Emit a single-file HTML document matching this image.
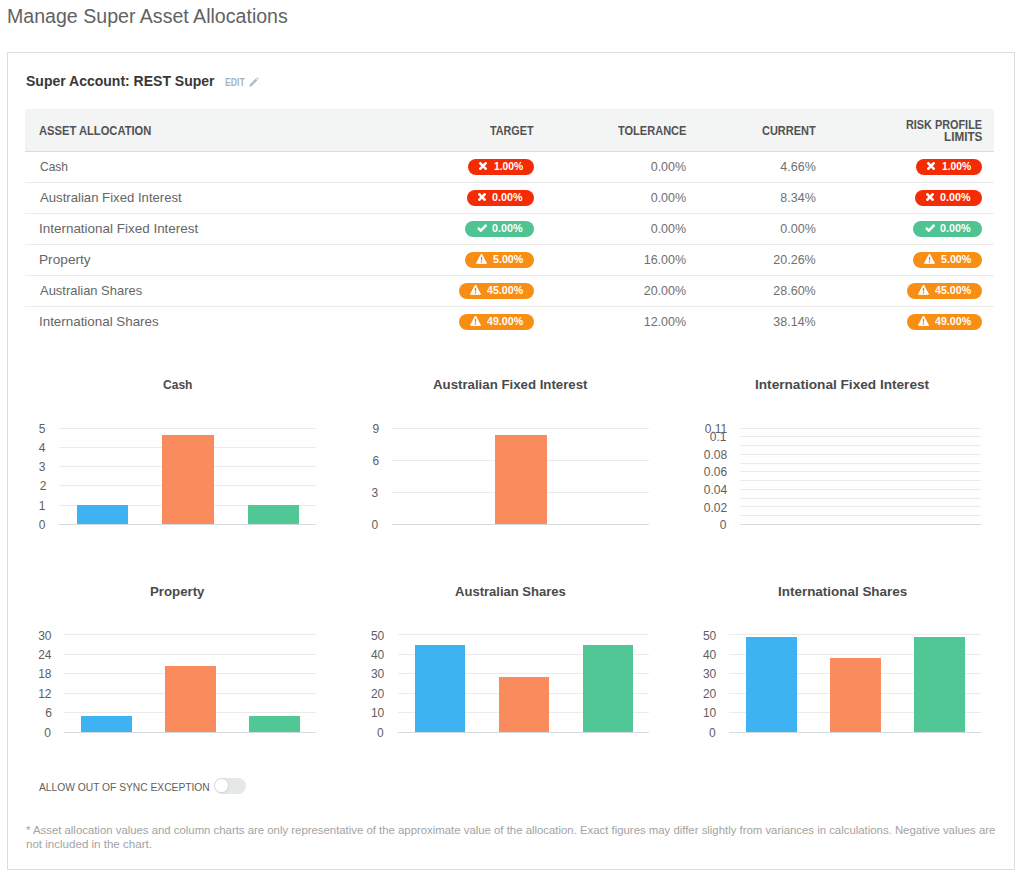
<!DOCTYPE html>
<html><head><meta charset="utf-8"><title>Manage Super Asset Allocations</title>
<style>
html,body{margin:0;padding:0;background:#fff;}
body{width:1023px;height:879px;position:relative;overflow:hidden;font-family:"Liberation Sans",sans-serif;}
.t{position:absolute;white-space:nowrap;}
.r{position:absolute;}
</style></head><body>
<div class='r' style='left:7.00px;top:52.00px;width:1008.00px;height:818.00px;background:#fff;box-sizing:border-box;border:1px solid #dddddd;'></div>
<svg class='r' style='left:247.5px;top:77px' width='11' height='11' viewBox='0 0 11 11'><path d='M1.3 9.7 L1.8 7.4 L7.6 1.6 L9.4 3.4 L3.6 9.2 Z M8.2 1.0 L9.0 0.3 L10.7 2.0 L10.0 2.8 Z' fill='#b4bcc4'/></svg>
<div class='r' style='left:25.00px;top:109.00px;width:969.00px;height:42.00px;background:#f3f4f4;'></div>
<div class='r' style='left:25.00px;top:150.50px;width:969.00px;height:1.00px;background:#dcdcdc;'></div>
<div class='r' style='left:468.20px;top:159.00px;width:65.80px;height:15.50px;background:#f42b05;border-radius:8px;'></div>
<div class='r' style='left:478.80px;top:162.35px;width:8px;height:8px'><svg width='8' height='8' viewBox='0 0 8 8' style='display:block'><path d='M1.4 1.4 L6.6 6.6 M6.6 1.4 L1.4 6.6' stroke='#fff' stroke-width='2.6' stroke-linecap='square'/></svg></div>
<div class='r' style='left:916.20px;top:159.00px;width:65.80px;height:15.50px;background:#f42b05;border-radius:8px;'></div>
<div class='r' style='left:926.80px;top:162.35px;width:8px;height:8px'><svg width='8' height='8' viewBox='0 0 8 8' style='display:block'><path d='M1.4 1.4 L6.6 6.6 M6.6 1.4 L1.4 6.6' stroke='#fff' stroke-width='2.6' stroke-linecap='square'/></svg></div>
<div class='r' style='left:25.00px;top:182.00px;width:969.00px;height:1.00px;background:#ebebeb;'></div>
<div class='r' style='left:466.90px;top:190.00px;width:67.10px;height:15.50px;background:#f42b05;border-radius:8px;'></div>
<div class='r' style='left:477.50px;top:193.35px;width:8px;height:8px'><svg width='8' height='8' viewBox='0 0 8 8' style='display:block'><path d='M1.4 1.4 L6.6 6.6 M6.6 1.4 L1.4 6.6' stroke='#fff' stroke-width='2.6' stroke-linecap='square'/></svg></div>
<div class='r' style='left:914.90px;top:190.00px;width:67.10px;height:15.50px;background:#f42b05;border-radius:8px;'></div>
<div class='r' style='left:925.50px;top:193.35px;width:8px;height:8px'><svg width='8' height='8' viewBox='0 0 8 8' style='display:block'><path d='M1.4 1.4 L6.6 6.6 M6.6 1.4 L1.4 6.6' stroke='#fff' stroke-width='2.6' stroke-linecap='square'/></svg></div>
<div class='r' style='left:25.00px;top:213.00px;width:969.00px;height:1.00px;background:#ebebeb;'></div>
<div class='r' style='left:464.50px;top:221.00px;width:69.50px;height:15.50px;background:#4fc392;border-radius:8px;'></div>
<div class='r' style='left:476.50px;top:223.85px;width:10px;height:8px'><svg width='10' height='8' viewBox='0 0 10 8' style='display:block'><path d='M1.0 3.9 L3.8 6.6 L9.4 0.9' stroke='#fff' stroke-width='2.6' fill='none' stroke-linejoin='miter'/></svg></div>
<div class='r' style='left:912.50px;top:221.00px;width:69.50px;height:15.50px;background:#4fc392;border-radius:8px;'></div>
<div class='r' style='left:924.50px;top:223.85px;width:10px;height:8px'><svg width='10' height='8' viewBox='0 0 10 8' style='display:block'><path d='M1.0 3.9 L3.8 6.6 L9.4 0.9' stroke='#fff' stroke-width='2.6' fill='none' stroke-linejoin='miter'/></svg></div>
<div class='r' style='left:25.00px;top:244.00px;width:969.00px;height:1.00px;background:#ebebeb;'></div>
<div class='r' style='left:465.30px;top:252.00px;width:68.70px;height:15.50px;background:#f88e14;border-radius:8px;'></div>
<div class='r' style='left:476.00px;top:253.25px;width:11px;height:11px'><svg width='11' height='11' viewBox='0 0 11 11' style='display:block'><path d='M5.5 0.9 L10.5 10.3 L0.5 10.3 Z' fill='#fff' stroke='#fff' stroke-width='1' stroke-linejoin='round'/><rect x='4.85' y='3.9' width='1.3' height='3.5' fill='#b08a60'/><rect x='4.85' y='8.2' width='1.3' height='1.3' fill='#b08a60'/></svg></div>
<div class='r' style='left:913.30px;top:252.00px;width:68.70px;height:15.50px;background:#f88e14;border-radius:8px;'></div>
<div class='r' style='left:924.00px;top:253.25px;width:11px;height:11px'><svg width='11' height='11' viewBox='0 0 11 11' style='display:block'><path d='M5.5 0.9 L10.5 10.3 L0.5 10.3 Z' fill='#fff' stroke='#fff' stroke-width='1' stroke-linejoin='round'/><rect x='4.85' y='3.9' width='1.3' height='3.5' fill='#b08a60'/><rect x='4.85' y='8.2' width='1.3' height='1.3' fill='#b08a60'/></svg></div>
<div class='r' style='left:25.00px;top:275.00px;width:969.00px;height:1.00px;background:#ebebeb;'></div>
<div class='r' style='left:459.30px;top:283.00px;width:74.70px;height:15.50px;background:#f88e14;border-radius:8px;'></div>
<div class='r' style='left:470.00px;top:284.25px;width:11px;height:11px'><svg width='11' height='11' viewBox='0 0 11 11' style='display:block'><path d='M5.5 0.9 L10.5 10.3 L0.5 10.3 Z' fill='#fff' stroke='#fff' stroke-width='1' stroke-linejoin='round'/><rect x='4.85' y='3.9' width='1.3' height='3.5' fill='#b08a60'/><rect x='4.85' y='8.2' width='1.3' height='1.3' fill='#b08a60'/></svg></div>
<div class='r' style='left:907.30px;top:283.00px;width:74.70px;height:15.50px;background:#f88e14;border-radius:8px;'></div>
<div class='r' style='left:918.00px;top:284.25px;width:11px;height:11px'><svg width='11' height='11' viewBox='0 0 11 11' style='display:block'><path d='M5.5 0.9 L10.5 10.3 L0.5 10.3 Z' fill='#fff' stroke='#fff' stroke-width='1' stroke-linejoin='round'/><rect x='4.85' y='3.9' width='1.3' height='3.5' fill='#b08a60'/><rect x='4.85' y='8.2' width='1.3' height='1.3' fill='#b08a60'/></svg></div>
<div class='r' style='left:25.00px;top:306.00px;width:969.00px;height:1.00px;background:#ebebeb;'></div>
<div class='r' style='left:459.30px;top:314.00px;width:74.70px;height:15.50px;background:#f88e14;border-radius:8px;'></div>
<div class='r' style='left:470.00px;top:315.25px;width:11px;height:11px'><svg width='11' height='11' viewBox='0 0 11 11' style='display:block'><path d='M5.5 0.9 L10.5 10.3 L0.5 10.3 Z' fill='#fff' stroke='#fff' stroke-width='1' stroke-linejoin='round'/><rect x='4.85' y='3.9' width='1.3' height='3.5' fill='#b08a60'/><rect x='4.85' y='8.2' width='1.3' height='1.3' fill='#b08a60'/></svg></div>
<div class='r' style='left:907.30px;top:314.00px;width:74.70px;height:15.50px;background:#f88e14;border-radius:8px;'></div>
<div class='r' style='left:918.00px;top:315.25px;width:11px;height:11px'><svg width='11' height='11' viewBox='0 0 11 11' style='display:block'><path d='M5.5 0.9 L10.5 10.3 L0.5 10.3 Z' fill='#fff' stroke='#fff' stroke-width='1' stroke-linejoin='round'/><rect x='4.85' y='3.9' width='1.3' height='3.5' fill='#b08a60'/><rect x='4.85' y='8.2' width='1.3' height='1.3' fill='#b08a60'/></svg></div>
<div class='r' style='left:59.00px;top:505.00px;width:257.00px;height:1.00px;background:#ebebeb;'></div>
<div class='r' style='left:59.00px;top:485.00px;width:257.00px;height:1.00px;background:#ebebeb;'></div>
<div class='r' style='left:59.00px;top:466.00px;width:257.00px;height:1.00px;background:#ebebeb;'></div>
<div class='r' style='left:59.00px;top:447.00px;width:257.00px;height:1.00px;background:#ebebeb;'></div>
<div class='r' style='left:59.00px;top:428.00px;width:257.00px;height:1.00px;background:#ebebeb;'></div>
<div class='r' style='left:59.00px;top:524.00px;width:257.00px;height:1.00px;background:#d6dbdf;'></div>
<div class='r' style='left:77.00px;top:505.20px;width:51.00px;height:19.30px;background:#3db3f2;'></div>
<div class='r' style='left:162.00px;top:434.56px;width:52.00px;height:89.94px;background:#fa8b5c;'></div>
<div class='r' style='left:248.00px;top:505.20px;width:51.00px;height:19.30px;background:#50c794;'></div>
<div class='r' style='left:392.00px;top:492.00px;width:257.00px;height:1.00px;background:#ebebeb;'></div>
<div class='r' style='left:392.00px;top:460.00px;width:257.00px;height:1.00px;background:#ebebeb;'></div>
<div class='r' style='left:392.00px;top:428.00px;width:257.00px;height:1.00px;background:#ebebeb;'></div>
<div class='r' style='left:392.00px;top:524.00px;width:257.00px;height:1.00px;background:#d6dbdf;'></div>
<div class='r' style='left:495.00px;top:435.08px;width:52.00px;height:89.42px;background:#fa8b5c;'></div>
<div class='r' style='left:740.00px;top:515.00px;width:241.00px;height:1.00px;background:#ebebeb;'></div>
<div class='r' style='left:740.00px;top:498.00px;width:241.00px;height:1.00px;background:#ebebeb;'></div>
<div class='r' style='left:740.00px;top:480.00px;width:241.00px;height:1.00px;background:#ebebeb;'></div>
<div class='r' style='left:740.00px;top:463.00px;width:241.00px;height:1.00px;background:#ebebeb;'></div>
<div class='r' style='left:740.00px;top:445.00px;width:241.00px;height:1.00px;background:#ebebeb;'></div>
<div class='r' style='left:740.00px;top:506.00px;width:241.00px;height:1.00px;background:#ebebeb;'></div>
<div class='r' style='left:740.00px;top:489.00px;width:241.00px;height:1.00px;background:#ebebeb;'></div>
<div class='r' style='left:740.00px;top:471.00px;width:241.00px;height:1.00px;background:#ebebeb;'></div>
<div class='r' style='left:740.00px;top:454.00px;width:241.00px;height:1.00px;background:#ebebeb;'></div>
<div class='r' style='left:740.00px;top:436.00px;width:241.00px;height:1.00px;background:#ebebeb;'></div>
<div class='r' style='left:740.00px;top:428.00px;width:241.00px;height:1.00px;background:#ebebeb;'></div>
<div class='r' style='left:740.00px;top:524.00px;width:241.00px;height:1.00px;background:#d6dbdf;'></div>
<div class='r' style='left:64.00px;top:712.00px;width:252.00px;height:1.00px;background:#ebebeb;'></div>
<div class='r' style='left:64.00px;top:693.00px;width:252.00px;height:1.00px;background:#ebebeb;'></div>
<div class='r' style='left:64.00px;top:673.00px;width:252.00px;height:1.00px;background:#ebebeb;'></div>
<div class='r' style='left:64.00px;top:654.00px;width:252.00px;height:1.00px;background:#ebebeb;'></div>
<div class='r' style='left:64.00px;top:634.00px;width:252.00px;height:1.00px;background:#ebebeb;'></div>
<div class='r' style='left:64.00px;top:732.00px;width:252.00px;height:1.00px;background:#d6dbdf;'></div>
<div class='r' style='left:81.00px;top:715.83px;width:51.00px;height:16.17px;background:#3db3f2;'></div>
<div class='r' style='left:165.00px;top:666.49px;width:51.00px;height:65.51px;background:#fa8b5c;'></div>
<div class='r' style='left:249.00px;top:715.83px;width:51.00px;height:16.17px;background:#50c794;'></div>
<div class='r' style='left:397.50px;top:712.00px;width:251.80px;height:1.00px;background:#ebebeb;'></div>
<div class='r' style='left:397.50px;top:693.00px;width:251.80px;height:1.00px;background:#ebebeb;'></div>
<div class='r' style='left:397.50px;top:673.00px;width:251.80px;height:1.00px;background:#ebebeb;'></div>
<div class='r' style='left:397.50px;top:654.00px;width:251.80px;height:1.00px;background:#ebebeb;'></div>
<div class='r' style='left:397.50px;top:634.00px;width:251.80px;height:1.00px;background:#ebebeb;'></div>
<div class='r' style='left:397.50px;top:732.00px;width:251.80px;height:1.00px;background:#d6dbdf;'></div>
<div class='r' style='left:415.00px;top:644.70px;width:50.00px;height:87.30px;background:#3db3f2;'></div>
<div class='r' style='left:499.00px;top:676.52px;width:50.00px;height:55.48px;background:#fa8b5c;'></div>
<div class='r' style='left:583.00px;top:644.70px;width:50.00px;height:87.30px;background:#50c794;'></div>
<div class='r' style='left:729.00px;top:712.00px;width:252.20px;height:1.00px;background:#ebebeb;'></div>
<div class='r' style='left:729.00px;top:693.00px;width:252.20px;height:1.00px;background:#ebebeb;'></div>
<div class='r' style='left:729.00px;top:673.00px;width:252.20px;height:1.00px;background:#ebebeb;'></div>
<div class='r' style='left:729.00px;top:654.00px;width:252.20px;height:1.00px;background:#ebebeb;'></div>
<div class='r' style='left:729.00px;top:634.00px;width:252.20px;height:1.00px;background:#ebebeb;'></div>
<div class='r' style='left:729.00px;top:732.00px;width:252.20px;height:1.00px;background:#d6dbdf;'></div>
<div class='r' style='left:746.00px;top:636.94px;width:51.00px;height:95.06px;background:#3db3f2;'></div>
<div class='r' style='left:830.00px;top:658.01px;width:51.00px;height:73.99px;background:#fa8b5c;'></div>
<div class='r' style='left:914.00px;top:636.94px;width:51.00px;height:95.06px;background:#50c794;'></div>
<div class='r' style='left:214.50px;top:778.00px;width:31.00px;height:15.50px;background:#e5e8e9;border-radius:8px;'></div>
<div class='r' style='left:215.30px;top:779.30px;width:12.80px;height:12.80px;background:#fff;border-radius:50%;box-shadow:0 0 0 1px #d7dadc, 0 1px 2px rgba(0,0,0,.12);'></div>
<div class='t' style='top:6.07px;font-size:20px;line-height:20px;font-weight:400;color:#626262;left:7.02px;transform-origin:0 0;transform:scaleX(0.9789);'>Manage Super Asset Allocations</div>
<div class='t' style='top:74.15px;font-size:14px;line-height:14px;font-weight:700;color:#383838;left:26.00px;transform-origin:0 0;'>Super Account: REST Super</div>
<div class='t' style='top:77.83px;font-size:10px;line-height:10px;font-weight:700;color:#a9b4bd;left:224.50px;transform-origin:0 0;transform:scaleX(0.8696);'>EDIT</div>
<div class='t' style='top:124.84px;font-size:12px;line-height:12px;font-weight:700;color:#525252;left:39.30px;transform-origin:0 0;transform:scaleX(0.9308);'>ASSET ALLOCATION</div>
<div class='t' style='top:124.84px;font-size:12px;line-height:12px;font-weight:700;color:#525252;left:490.00px;transform-origin:0 0;transform:scaleX(0.8980);'>TARGET</div>
<div class='t' style='top:124.84px;font-size:12px;line-height:12px;font-weight:700;color:#525252;left:618.00px;transform-origin:0 0;transform:scaleX(0.9189);'>TOLERANCE</div>
<div class='t' style='top:124.84px;font-size:12px;line-height:12px;font-weight:700;color:#525252;left:761.50px;transform-origin:0 0;transform:scaleX(0.9153);'>CURRENT</div>
<div class='t' style='top:119.14px;font-size:12px;line-height:12px;font-weight:700;color:#525252;left:906.00px;transform-origin:0 0;transform:scaleX(0.9048);'>RISK PROFILE</div>
<div class='t' style='top:130.84px;font-size:12px;line-height:12px;font-weight:700;color:#525252;left:944.00px;transform-origin:0 0;transform:scaleX(0.9744);'>LIMITS</div>
<div class='t' style='top:159.70px;font-size:13px;line-height:13px;font-weight:400;color:#666;left:39.60px;transform-origin:0 0;transform:scaleX(0.9233);'>Cash</div>
<div class='t' style='top:160.62px;font-size:12.5px;line-height:12.5px;font-weight:400;color:#707070;left:650.70px;transform-origin:0 0;'>0.00%</div>
<div class='t' style='top:160.62px;font-size:12.5px;line-height:12.5px;font-weight:400;color:#707070;left:780.30px;transform-origin:0 0;'>4.66%</div>
<div class='t' style='top:161.26px;font-size:10.5px;line-height:10.5px;font-weight:700;color:#fff;left:493.60px;transform-origin:0 0;transform:scaleX(0.9800);'>1.00%</div>
<div class='t' style='top:161.26px;font-size:10.5px;line-height:10.5px;font-weight:700;color:#fff;left:941.60px;transform-origin:0 0;transform:scaleX(0.9800);'>1.00%</div>
<div class='t' style='top:190.70px;font-size:13px;line-height:13px;font-weight:400;color:#666;left:39.60px;transform-origin:0 0;transform:scaleX(1.0114);'>Australian Fixed Interest</div>
<div class='t' style='top:191.62px;font-size:12.5px;line-height:12.5px;font-weight:400;color:#707070;left:650.70px;transform-origin:0 0;'>0.00%</div>
<div class='t' style='top:191.62px;font-size:12.5px;line-height:12.5px;font-weight:400;color:#707070;left:780.30px;transform-origin:0 0;'>8.34%</div>
<div class='t' style='top:192.26px;font-size:10.5px;line-height:10.5px;font-weight:700;color:#fff;left:492.30px;transform-origin:0 0;transform:scaleX(1.0233);'>0.00%</div>
<div class='t' style='top:192.26px;font-size:10.5px;line-height:10.5px;font-weight:700;color:#fff;left:940.30px;transform-origin:0 0;transform:scaleX(1.0233);'>0.00%</div>
<div class='t' style='top:221.70px;font-size:13px;line-height:13px;font-weight:400;color:#666;left:38.57px;transform-origin:0 0;transform:scaleX(1.0346);'>International Fixed Interest</div>
<div class='t' style='top:222.62px;font-size:12.5px;line-height:12.5px;font-weight:400;color:#707070;left:650.70px;transform-origin:0 0;'>0.00%</div>
<div class='t' style='top:222.62px;font-size:12.5px;line-height:12.5px;font-weight:400;color:#707070;left:780.30px;transform-origin:0 0;'>0.00%</div>
<div class='t' style='top:223.26px;font-size:10.5px;line-height:10.5px;font-weight:700;color:#fff;left:492.30px;transform-origin:0 0;transform:scaleX(1.0233);'>0.00%</div>
<div class='t' style='top:223.26px;font-size:10.5px;line-height:10.5px;font-weight:700;color:#fff;left:940.30px;transform-origin:0 0;transform:scaleX(1.0233);'>0.00%</div>
<div class='t' style='top:252.70px;font-size:13px;line-height:13px;font-weight:400;color:#666;left:38.55px;transform-origin:0 0;transform:scaleX(1.0521);'>Property</div>
<div class='t' style='top:253.62px;font-size:12.5px;line-height:12.5px;font-weight:400;color:#707070;left:643.70px;transform-origin:0 0;'>16.00%</div>
<div class='t' style='top:253.62px;font-size:12.5px;line-height:12.5px;font-weight:400;color:#707070;left:773.30px;transform-origin:0 0;'>20.26%</div>
<div class='t' style='top:254.26px;font-size:10.5px;line-height:10.5px;font-weight:700;color:#fff;left:492.50px;transform-origin:0 0;transform:scaleX(1.0167);'>5.00%</div>
<div class='t' style='top:254.26px;font-size:10.5px;line-height:10.5px;font-weight:700;color:#fff;left:940.50px;transform-origin:0 0;transform:scaleX(1.0167);'>5.00%</div>
<div class='t' style='top:283.70px;font-size:13px;line-height:13px;font-weight:400;color:#666;left:39.60px;transform-origin:0 0;transform:scaleX(0.9951);'>Australian Shares</div>
<div class='t' style='top:284.62px;font-size:12.5px;line-height:12.5px;font-weight:400;color:#707070;left:643.70px;transform-origin:0 0;'>20.00%</div>
<div class='t' style='top:284.62px;font-size:12.5px;line-height:12.5px;font-weight:400;color:#707070;left:773.30px;transform-origin:0 0;'>28.60%</div>
<div class='t' style='top:285.26px;font-size:10.5px;line-height:10.5px;font-weight:700;color:#fff;left:486.50px;transform-origin:0 0;transform:scaleX(1.0139);'>45.00%</div>
<div class='t' style='top:285.26px;font-size:10.5px;line-height:10.5px;font-weight:700;color:#fff;left:934.50px;transform-origin:0 0;transform:scaleX(1.0139);'>45.00%</div>
<div class='t' style='top:314.70px;font-size:13px;line-height:13px;font-weight:400;color:#666;left:38.57px;transform-origin:0 0;transform:scaleX(1.0287);'>International Shares</div>
<div class='t' style='top:315.62px;font-size:12.5px;line-height:12.5px;font-weight:400;color:#707070;left:643.70px;transform-origin:0 0;'>12.00%</div>
<div class='t' style='top:315.62px;font-size:12.5px;line-height:12.5px;font-weight:400;color:#707070;left:773.30px;transform-origin:0 0;'>38.14%</div>
<div class='t' style='top:316.26px;font-size:10.5px;line-height:10.5px;font-weight:700;color:#fff;left:486.50px;transform-origin:0 0;transform:scaleX(1.0139);'>49.00%</div>
<div class='t' style='top:316.26px;font-size:10.5px;line-height:10.5px;font-weight:700;color:#fff;left:934.50px;transform-origin:0 0;transform:scaleX(1.0139);'>49.00%</div>
<div class='t' style='top:377.80px;font-size:13px;line-height:13px;font-weight:700;color:#4a4a4a;left:163.35px;transform-origin:0 0;transform:scaleX(0.9258);'>Cash</div>
<div class='t' style='top:519.04px;font-size:12px;line-height:12px;font-weight:400;color:#606060;left:38.70px;transform-origin:0 0;'>0</div>
<div class='t' style='top:499.74px;font-size:12px;line-height:12px;font-weight:400;color:#606060;left:38.70px;transform-origin:0 0;'>1</div>
<div class='t' style='top:480.44px;font-size:12px;line-height:12px;font-weight:400;color:#606060;left:39.70px;transform-origin:0 0;'>2</div>
<div class='t' style='top:461.14px;font-size:12px;line-height:12px;font-weight:400;color:#606060;left:38.70px;transform-origin:0 0;'>3</div>
<div class='t' style='top:441.84px;font-size:12px;line-height:12px;font-weight:400;color:#606060;left:38.70px;transform-origin:0 0;'>4</div>
<div class='t' style='top:422.54px;font-size:12px;line-height:12px;font-weight:400;color:#606060;left:38.70px;transform-origin:0 0;'>5</div>
<div class='t' style='top:377.80px;font-size:13px;line-height:13px;font-weight:700;color:#4a4a4a;left:433.20px;transform-origin:0 0;transform:scaleX(1.0184);'>Australian Fixed Interest</div>
<div class='t' style='top:519.04px;font-size:12px;line-height:12px;font-weight:400;color:#606060;left:371.40px;transform-origin:0 0;'>0</div>
<div class='t' style='top:486.88px;font-size:12px;line-height:12px;font-weight:400;color:#606060;left:371.40px;transform-origin:0 0;'>3</div>
<div class='t' style='top:454.71px;font-size:12px;line-height:12px;font-weight:400;color:#606060;left:372.40px;transform-origin:0 0;'>6</div>
<div class='t' style='top:422.54px;font-size:12px;line-height:12px;font-weight:400;color:#606060;left:372.40px;transform-origin:0 0;'>9</div>
<div class='t' style='top:377.80px;font-size:13px;line-height:13px;font-weight:700;color:#4a4a4a;left:755.30px;transform-origin:0 0;transform:scaleX(1.0479);'>International Fixed Interest</div>
<div class='t' style='top:519.04px;font-size:12px;line-height:12px;font-weight:400;color:#606060;left:719.80px;transform-origin:0 0;'>0</div>
<div class='t' style='top:501.50px;font-size:12px;line-height:12px;font-weight:400;color:#606060;left:703.80px;transform-origin:0 0;'>0.02</div>
<div class='t' style='top:483.95px;font-size:12px;line-height:12px;font-weight:400;color:#606060;left:703.80px;transform-origin:0 0;'>0.04</div>
<div class='t' style='top:466.41px;font-size:12px;line-height:12px;font-weight:400;color:#606060;left:703.80px;transform-origin:0 0;'>0.06</div>
<div class='t' style='top:448.86px;font-size:12px;line-height:12px;font-weight:400;color:#606060;left:703.80px;transform-origin:0 0;'>0.08</div>
<div class='t' style='top:431.31px;font-size:12px;line-height:12px;font-weight:400;color:#606060;left:709.80px;transform-origin:0 0;'>0.1</div>
<div class='t' style='top:422.54px;font-size:12px;line-height:12px;font-weight:400;color:#606060;left:704.80px;transform-origin:0 0;'>0.11</div>
<div class='t' style='top:584.60px;font-size:13px;line-height:13px;font-weight:700;color:#4a4a4a;left:149.88px;transform-origin:0 0;transform:scaleX(1.0189);'>Property</div>
<div class='t' style='top:726.54px;font-size:12px;line-height:12px;font-weight:400;color:#606060;left:44.20px;transform-origin:0 0;'>0</div>
<div class='t' style='top:707.14px;font-size:12px;line-height:12px;font-weight:400;color:#606060;left:45.20px;transform-origin:0 0;'>6</div>
<div class='t' style='top:687.74px;font-size:12px;line-height:12px;font-weight:400;color:#606060;left:38.20px;transform-origin:0 0;'>12</div>
<div class='t' style='top:668.34px;font-size:12px;line-height:12px;font-weight:400;color:#606060;left:38.20px;transform-origin:0 0;'>18</div>
<div class='t' style='top:648.94px;font-size:12px;line-height:12px;font-weight:400;color:#606060;left:38.20px;transform-origin:0 0;'>24</div>
<div class='t' style='top:629.54px;font-size:12px;line-height:12px;font-weight:400;color:#606060;left:38.20px;transform-origin:0 0;'>30</div>
<div class='t' style='top:584.60px;font-size:13px;line-height:13px;font-weight:700;color:#4a4a4a;left:455.45px;transform-origin:0 0;transform:scaleX(1.0027);'>Australian Shares</div>
<div class='t' style='top:726.54px;font-size:12px;line-height:12px;font-weight:400;color:#606060;left:376.90px;transform-origin:0 0;'>0</div>
<div class='t' style='top:707.14px;font-size:12px;line-height:12px;font-weight:400;color:#606060;left:370.90px;transform-origin:0 0;'>10</div>
<div class='t' style='top:687.74px;font-size:12px;line-height:12px;font-weight:400;color:#606060;left:370.90px;transform-origin:0 0;'>20</div>
<div class='t' style='top:668.34px;font-size:12px;line-height:12px;font-weight:400;color:#606060;left:370.90px;transform-origin:0 0;'>30</div>
<div class='t' style='top:648.94px;font-size:12px;line-height:12px;font-weight:400;color:#606060;left:370.90px;transform-origin:0 0;'>40</div>
<div class='t' style='top:629.54px;font-size:12px;line-height:12px;font-weight:400;color:#606060;left:370.90px;transform-origin:0 0;'>50</div>
<div class='t' style='top:584.60px;font-size:13px;line-height:13px;font-weight:700;color:#4a4a4a;left:777.77px;transform-origin:0 0;transform:scaleX(1.0339);'>International Shares</div>
<div class='t' style='top:726.54px;font-size:12px;line-height:12px;font-weight:400;color:#606060;left:708.90px;transform-origin:0 0;'>0</div>
<div class='t' style='top:707.14px;font-size:12px;line-height:12px;font-weight:400;color:#606060;left:702.90px;transform-origin:0 0;'>10</div>
<div class='t' style='top:687.74px;font-size:12px;line-height:12px;font-weight:400;color:#606060;left:702.90px;transform-origin:0 0;'>20</div>
<div class='t' style='top:668.34px;font-size:12px;line-height:12px;font-weight:400;color:#606060;left:702.90px;transform-origin:0 0;'>30</div>
<div class='t' style='top:648.94px;font-size:12px;line-height:12px;font-weight:400;color:#606060;left:702.90px;transform-origin:0 0;'>40</div>
<div class='t' style='top:629.54px;font-size:12px;line-height:12px;font-weight:400;color:#606060;left:702.90px;transform-origin:0 0;'>50</div>
<div class='t' style='top:782.09px;font-size:11px;line-height:11px;font-weight:400;color:#606060;left:39.40px;transform-origin:0 0;transform:scaleX(0.9322);'>ALLOW OUT OF SYNC EXCEPTION</div>
<div class='t' style='top:824.69px;font-size:11px;line-height:11px;font-weight:400;color:#a3a3a3;left:26.00px;transform-origin:0 0;transform:scaleX(1.0330);'>* Asset allocation values and column charts are only representative of the approximate value of the allocation. Exact figures may differ slightly from variances in calculations. Negative values are</div>
<div class='t' style='top:838.69px;font-size:11px;line-height:11px;font-weight:400;color:#a3a3a3;left:26.00px;transform-origin:0 0;transform:scaleX(1.0504);'>not included in the chart.</div>
</body></html>
